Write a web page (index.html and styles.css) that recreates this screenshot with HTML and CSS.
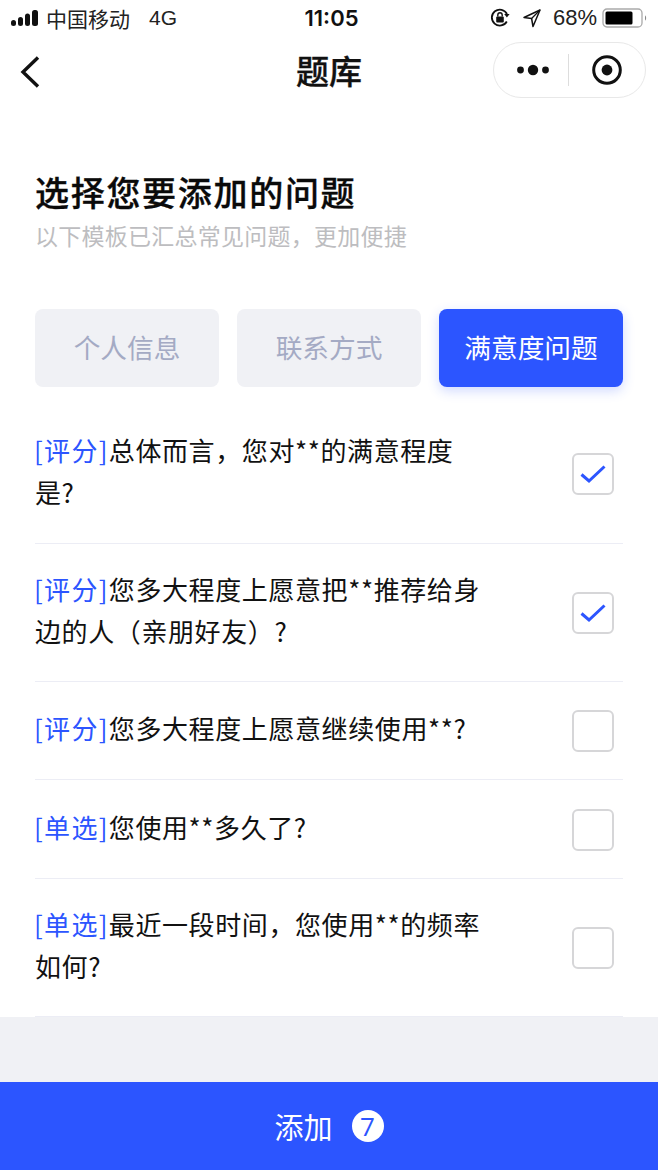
FILE: index.html
```html
<!DOCTYPE html>
<html lang="zh">
<head>
<meta charset="utf-8">
<title>题库</title>
<link rel="stylesheet" href="styles.css">
</head>
<body>
<div class="page">
  <div class="status">
    <div class="status-left">
      <svg class="signal" width="30" height="18" viewBox="0 0 30 18"><rect x="1" y="11" width="5" height="6" rx="2.500"/><rect x="8" y="8" width="5" height="9" rx="2.500"/><rect x="15" y="4.500" width="5" height="12.500" rx="2.500"/><rect x="22" y="1" width="6" height="16" rx="2.500"/></svg>
      <span class="carrier">中国移动</span><span class="net">4G</span>
    </div>
    <div class="time">11:05</div>
    <div class="status-right">
      <svg width="22" height="22" viewBox="0 0 22 22"><path d="M17.800 14.500A8 8 0 1 1 18 7" fill="none" stroke="#111" stroke-width="1.800"/><path d="M15.200 7h5.400l-2.700 3.400z" fill="#111"/><rect x="7.200" y="9.500" width="7.600" height="6" rx="1" fill="#111"/><path d="M8.800 9.500V8a2.200 2.200 0 0 1 4.400 0v1.500" fill="none" stroke="#111" stroke-width="1.400"/></svg>
      <svg class="loc" width="20" height="20" viewBox="0 0 20 20"><path d="M18 2 2 9.500l7.600 1L11 18.500z" fill="none" stroke="#111" stroke-width="1.500" stroke-linejoin="round"/><path d="M18 2 9.600 10.500" stroke="#111" stroke-width="1.200"/></svg>
      <span class="pct">68%</span>
      <svg width="46" height="20" viewBox="0 0 46 20"><rect x="1" y="1" width="39" height="18" rx="4" fill="none" stroke="#aaa" stroke-width="1.300"/><rect x="3.500" y="3.500" width="27" height="13" rx="1.500" fill="#000"/><path d="M43 7.500c1.500.4 1.500 4.600 0 5z" fill="#888"/></svg>
    </div>
  </div>

  <div class="nav">
    <svg class="back" width="22" height="34" viewBox="0 0 22 34"><path d="M19 2.500 4 17l15 14.500" fill="none" stroke="#111" stroke-width="3.400"/></svg>
    <div class="nav-title">题库</div>
    <div class="capsule">
      <svg class="dots" width="34" height="16" viewBox="0 0 34 16"><circle cx="4.500" cy="8" r="3.400"/><circle cx="17" cy="8" r="5.200"/><circle cx="29.500" cy="8" r="3.400"/></svg>
      <span class="cap-line"></span>
      <svg width="32" height="32" viewBox="0 0 32 32"><circle cx="16" cy="16" r="13.300" fill="none" stroke="#111" stroke-width="3"/><circle cx="16" cy="16" r="5.400" fill="#111"/></svg>
    </div>
  </div>

  <main class="main">
    <h1 class="heading">选择您要添加的问题</h1>
    <p class="sub">以下模板已汇总常见问题，更加便捷</p>
    <div class="tabs">
      <div class="tab">个人信息</div>
      <div class="tab">联系方式</div>
      <div class="tab tab-on">满意度问题</div>
    </div>
    <div class="list">
      <div class="row row-1">
        <div class="q"><span class="tag">[评分]</span>总体而言，您对**的满意程度<br>是?</div>
        <span class="box"><svg width="28" height="22" viewBox="0 0 28 22"><path d="M2.500 11.500 10 18 25.500 3.500" fill="none" stroke="#2c55ff" stroke-width="3"/></svg></span>
      </div>
      <div class="row">
        <div class="q"><span class="tag">[评分]</span>您多大程度上愿意把**推荐给身<br>边的人（亲朋好友）?</div>
        <span class="box"><svg width="28" height="22" viewBox="0 0 28 22"><path d="M2.500 11.500 10 18 25.500 3.500" fill="none" stroke="#2c55ff" stroke-width="3"/></svg></span>
      </div>
      <div class="row row-3">
        <div class="q"><span class="tag">[评分]</span>您多大程度上愿意继续使用**?</div>
        <span class="box"></span>
      </div>
      <div class="row row-4">
        <div class="q"><span class="tag">[单选]</span>您使用**多久了?</div>
        <span class="box"></span>
      </div>
      <div class="row">
        <div class="q"><span class="tag">[单选]</span>最近一段时间，您使用**的频率<br>如何?</div>
        <span class="box"></span>
      </div>
    </div>
  </main>

  <div class="gap"></div>
  <div class="add">
    <span class="add-text">添加</span>
    <span class="badge">7</span>
  </div>
</div>
</body>
</html>
```
FILE: styles.css
```css
* { box-sizing: border-box; }
html, body { margin: 0; padding: 0; }
body {
  background: #fff;
  color: #111;
  font-family: "Noto Sans CJK SC", "Liberation Sans", sans-serif;
}
.page {
  width: 658px;
  height: 1170px;
  display: flex;
  flex-direction: column;
  overflow: hidden;
}
.status {
  height: 36px;
  padding: 0 10px;
  display: flex;
  align-items: center;
  justify-content: space-between;
  font-family: "Liberation Sans", "Noto Sans CJK SC", sans-serif;
  font-size: 21px;
  color: #222;
}
.status-left, .status-right { display: flex; align-items: center; }
.status-left { width: 200px; }
.signal { fill: #111; margin-right: 6px; }
.net { margin-left: 19px; }
.time { font-family: Inter, "Liberation Sans", sans-serif; font-size: 22px; font-weight: 600; color: #111; margin-left: 5px; }
.status-right { width: 200px; justify-content: flex-end; }
.loc { margin-left: 11px; }
.pct { margin-left: 11px; margin-right: 5px; font-size: 22px; }
.nav {
  height: 68px;
  position: relative;
  display: flex;
  align-items: center;
  justify-content: center;
}
.back { position: absolute; left: 19px; top: 19px; }
.nav-title { font-size: 33px; font-weight: 500; -webkit-text-stroke: 0.350px #111; line-height: 44px; }
.capsule {
  position: absolute;
  left: 493px;
  top: 6px;
  width: 153px;
  height: 56px;
  border: 1px solid #e8e8e8;
  border-radius: 28px;
  display: flex;
  align-items: center;
  padding-left: 22px;
  fill: #111;
}
.cap-line { width: 1px; height: 32px; background: #ddd; margin: 0 22px 0 18px; }
.main { padding: 65px 35px 0; flex: none; }
.heading {
  margin: 0;
  font-size: 34px;
  letter-spacing: 1.700px;
  line-height: 46px;
  font-weight: 500;
  -webkit-text-stroke: 0.350px #0a0a0a;
  color: #0a0a0a;
}
.sub {
  margin: 4px 0 0;
  font-size: 23px;
  line-height: 32px;
  letter-spacing: 0.250px;
  color: #bdbdc0;
}
.tabs {
  display: grid;
  grid-template-columns: repeat(3, 184px);
  column-gap: 18px;
  margin-top: 58px;
}
.tab {
  height: 78px;
  padding-bottom: 4px;
  border-radius: 8px;
  background: #f0f1f5;
  color: #a4aac4;
  font-size: 26.700px;
  display: flex;
  align-items: center;
  justify-content: center;
}
.tab-on {
  background: #2c55ff;
  color: #fff;
  box-shadow: 0 4px 12px rgba(44, 85, 255, 0.22);
}
.list { margin-top: 18px; }
.row {
  display: flex;
  justify-content: space-between;
  align-items: center;
  padding: 26px 9px 27px 0;
  border-bottom: 1px solid #ecedf5;
}
.row-1 { padding-bottom: 28px; }
.row-3 { padding-top: 27px; padding-bottom: 28px; }
.row-4 { padding-top: 28px; padding-bottom: 28px; }
.q { font-size: 26px; line-height: 42px; letter-spacing: 0.600px; color: #111; margin: -2px 0 2px; }
.tag { color: #2c55ff; letter-spacing: 1.300px; margin-left: -1px; }
.box {
  width: 42px;
  height: 42px;
  margin: 1px 0 -1px;
  border: 2px solid #d6d6d8;
  border-radius: 6px;
  background: #fff;
  display: flex;
  align-items: center;
  justify-content: center;
  flex: none;
}
.gap { flex: 1; background: #f0f1f5; }
.add {
  height: 88px;
  background: #2c55ff;
  display: flex;
  align-items: center;
  justify-content: center;
  color: #fff;
}
.add-text { font-size: 29px; margin-right: 19px; }
.badge {
  width: 32px;
  height: 32px;
  border-radius: 50%;
  background: #fff;
  color: #2c55ff;
  font-size: 26px;
  font-family: "Open Sans", "Liberation Sans", sans-serif;
  display: flex;
  align-items: center;
  justify-content: center;
}
```
